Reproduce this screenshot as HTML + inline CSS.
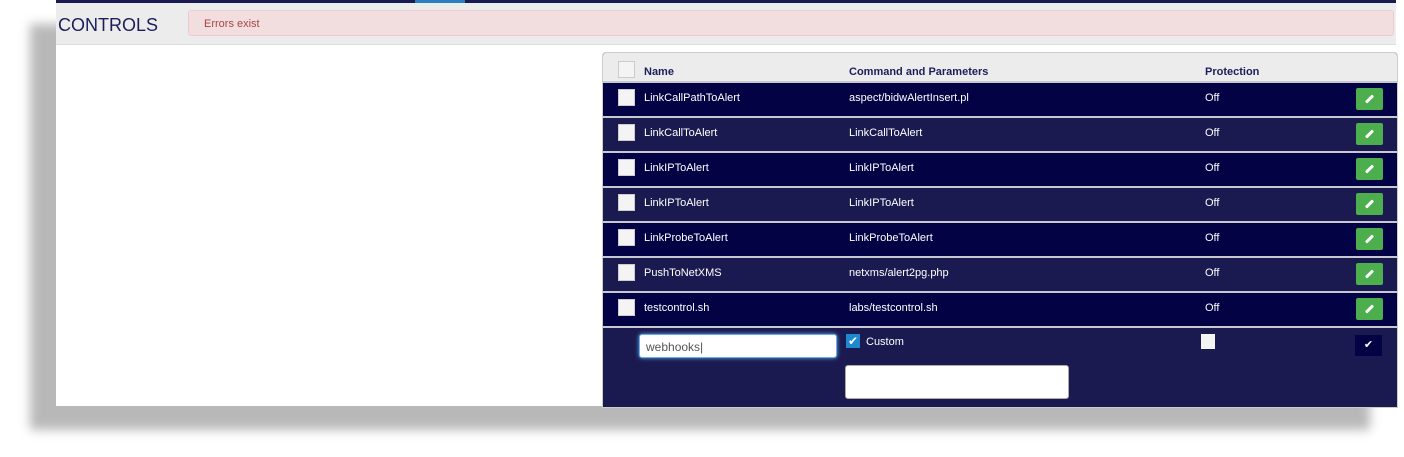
<!DOCTYPE html>
<html><head><style>
body{margin:0;width:1404px;height:457px;background:#fff;position:relative;overflow:hidden;font-family:"Liberation Sans",Arial,sans-serif}
#panel{position:absolute;left:56px;top:0;width:1340px;height:406px;background:#fff;box-shadow:-26px 24px 10px rgba(0,0,0,0.28)}
#topline{position:absolute;left:0;top:0;width:1340px;height:3px;background:#1a1a50}
#acc{position:absolute;left:359px;top:0;width:50px;height:3px;background:#2a7fc0}
#hdr{position:absolute;left:0;top:3px;width:1340px;height:41px;background:#ececec;border-bottom:1px solid #ddd}
#title{position:absolute;left:2px;top:12px;font-size:18px;color:#1a1f5a}
#err{position:absolute;left:132px;top:7px;width:1206px;height:26px;background:#f2dede;border:1px solid #ebccd1;border-radius:3px;color:#a94442;font-size:11px;line-height:26px;padding-left:15px;box-sizing:border-box}
#tbl{position:absolute;left:546px;top:52px;width:794px;height:354px;background:#1a1a50;border:1px solid #ccc;border-radius:4px 4px 0 0;overflow:hidden}
.row{position:absolute;left:0;width:794px;height:33px;color:#fff;font-size:11px;border-top:2px solid #c8c8d0}
.row span{position:absolute;top:9px}
.h{top:0;height:28px;background:#ececec;color:#1a1f5a;font-weight:bold;border-top:none}
.h span{top:13px}
.cb{position:absolute;left:15px;top:6px;width:15px;height:15px;background:#f4f4f4;border:1px solid #ccc}
.ed{position:absolute;left:753px;top:5px;width:27px;height:22px;background:#4cae4c;border-radius:2px}
.ed:after{content:"";position:absolute;left:12px;top:6px;width:3px;height:10px;background:#fff;transform:rotate(45deg);border-radius:1px}
</style></head><body>
<div id="panel">
<div id="topline"></div><div id="acc"></div>
<div id="hdr"><div id="title">CONTROLS</div><div id="err">Errors exist</div></div>
<div id="tbl">
<div class="row h"><div class="cb" style="top:8px"></div><span style="left:41px">Name</span><span style="left:246px">Command and Parameters</span><span style="left:602px">Protection</span></div>
<div class="row" style="top:28px;background:#020244"><div class="cb"></div><span style="left:41px">LinkCallPathToAlert</span><span style="left:246px">aspect/bidwAlertInsert.pl</span><span style="left:602px">Off</span><div class="ed"></div></div>
<div class="row" style="top:63px;background:#1a1a50"><div class="cb"></div><span style="left:41px">LinkCallToAlert</span><span style="left:246px">LinkCallToAlert</span><span style="left:602px">Off</span><div class="ed"></div></div>
<div class="row" style="top:98px;background:#020244"><div class="cb"></div><span style="left:41px">LinkIPToAlert</span><span style="left:246px">LinkIPToAlert</span><span style="left:602px">Off</span><div class="ed"></div></div>
<div class="row" style="top:133px;background:#1a1a50"><div class="cb"></div><span style="left:41px">LinkIPToAlert</span><span style="left:246px">LinkIPToAlert</span><span style="left:602px">Off</span><div class="ed"></div></div>
<div class="row" style="top:168px;background:#020244"><div class="cb"></div><span style="left:41px">LinkProbeToAlert</span><span style="left:246px">LinkProbeToAlert</span><span style="left:602px">Off</span><div class="ed"></div></div>
<div class="row" style="top:203px;background:#1a1a50"><div class="cb"></div><span style="left:41px">PushToNetXMS</span><span style="left:246px">netxms/alert2pg.php</span><span style="left:602px">Off</span><div class="ed"></div></div>
<div class="row" style="top:238px;background:#020244"><div class="cb"></div><span style="left:41px">testcontrol.sh</span><span style="left:246px">labs/testcontrol.sh</span><span style="left:602px">Off</span><div class="ed"></div></div>
<div class="row" style="top:273px;height:81px;background:#1a1a50">
<div style="position:absolute;left:36px;top:6px;width:198px;height:24px;background:#fff;border:1px solid #66afe9;border-radius:3px;box-shadow:0 0 4px #66afe9;color:#555;font-size:12px;line-height:24px;padding-left:6px;box-sizing:border-box">webhooks|</div>
<div style="position:absolute;left:243px;top:6px;width:14px;height:14px;background:#1e88d0;color:#fff;font-size:12px;line-height:14px;text-align:center">✔</div>
<span style="left:263px;top:8px">Custom</span>
<div style="position:absolute;left:242px;top:37px;width:222px;height:32px;background:#fff;border:1px solid #aaa;border-radius:3px"></div>
<div style="position:absolute;left:598px;top:6px;width:14px;height:15px;background:#f4f4f4"></div>
<div style="position:absolute;left:752px;top:7px;width:27px;height:21px;background:#020244;color:#fff;font-size:11px;line-height:21px;text-align:center">✔</div>
</div>
</div>
</div>
</body></html>
